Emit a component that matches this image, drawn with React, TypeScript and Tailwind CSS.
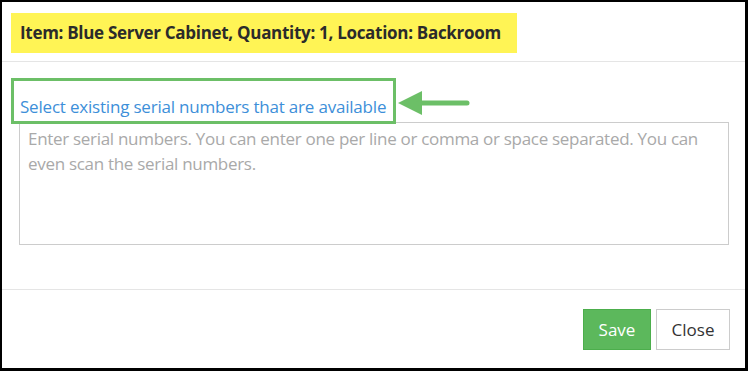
import React from "react";

export default function App() {
  return (
    <div className="w-[748px] h-[371px] box-border border-t-2 border-l-2 border-r-[3px] border-b-[3px] border-black bg-white relative font-['Open_Sans',sans-serif] overflow-hidden">
      <div className="h-[60px] border-b border-[#e5e5e5] pt-[11px] pl-[9px]">
        <div className="w-[506px] h-[40px] bg-[#fff455] flex items-center pl-[9px] text-[17px] font-bold text-[#2b2b2b] tracking-[-0.3px]">
          Item: Blue Server Cabinet, Quantity: 1, Location: Backroom
        </div>
      </div>
      <div className="h-[228px] border-b border-[#e5e5e5] pl-[17px] pr-[16px] pt-[29px]">
        <div className="text-[17px] text-[#3d8fd9] leading-[31px] pl-[1px] tracking-[-0.2px]">
          Select existing serial numbers that are available
        </div>
        <div className="h-[123px] border border-[#cccccc] px-[8px] pt-[3px] text-[17px] leading-[25px] text-[#a9a9a9] tracking-[-0.3px]">
          Enter serial numbers. You can enter one per line or comma or space separated. You can even scan the serial numbers.
        </div>
      </div>
      <div className="flex justify-end gap-[5px] pr-[15px] pt-[19px]">
        <button className="w-[68px] h-[41px] bg-[#5cb85c] text-white text-[17px] border border-[#4cae4c]">Save</button>
        <button className="w-[74px] h-[41px] bg-white text-[#333] text-[17px] border border-[#cccccc]">Close</button>
      </div>
      <div className="absolute left-[9px] top-[76px] w-[385px] h-[46px] border-[3px] border-[#6cbf67]" />
      <svg className="absolute left-[395px] top-[86px]" width="75" height="30" viewBox="0 0 75 30">
        <polygon points="1,15 25,3 25,27" fill="#6cbf67" />
        <line x1="22" y1="15" x2="70" y2="15" stroke="#6cbf67" strokeWidth="5" strokeLinecap="round" />
      </svg>
    </div>
  );
}
